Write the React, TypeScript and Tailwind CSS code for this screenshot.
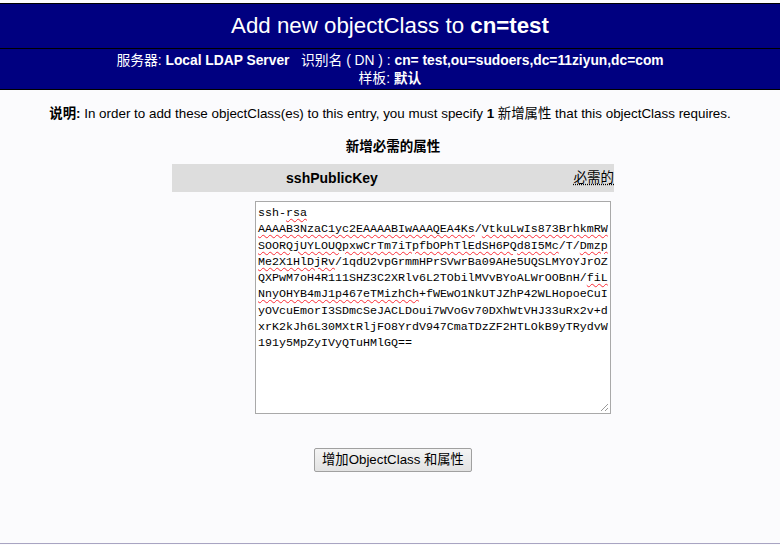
import React from "react";

const W = "underline decoration-wavy decoration-red-500 decoration-1 underline-offset-2";

export default function App() {
  const sans = { fontFamily: '"Liberation Sans", "Noto Sans CJK SC", sans-serif' };
  return (
    <div className="w-[780px] h-[545px] bg-[#fbfbfd] overflow-hidden" style={sans}>
      <div className="h-[544px] border-b border-[#a8a4c2] flex flex-col">
        <div className="h-[3px]" />
        <div className="bg-[#000080] border-t border-b border-black h-[46px] flex items-center justify-center text-white text-[22.3px] leading-none">
          <span>
            Add new objectClass to <b>cn=test</b>
          </span>
        </div>
        <div className="bg-[#000080] border-b border-black h-[41px] flex flex-col items-center pt-[3px] text-white text-[13.8px] leading-[17.5px]">
          <div>
            服务器: <b>Local LDAP Server</b>&nbsp;&nbsp; 识别名 ( DN ) : <b>cn= test,ou=sudoers,dc=11ziyun,dc=com</b>
          </div>
          <div>
            样板: <b>默认</b>
          </div>
        </div>

        <div className="mt-[15px] text-center text-[13.4px] leading-[17px] text-black">
          <b>说明:</b> In order to add these objectClass(es) to this entry, you must specify <b>1</b> 新增属性 that this objectClass requires.
        </div>

        <div className="flex justify-center mt-[16px]">
          <div className="w-[442px] ml-[6px] flex flex-col">
            <div className="text-center font-bold text-[13.5px] leading-[17px]">新增必需的属性</div>
            <div className="mt-[9px] h-[28px] bg-[#dddddd] flex items-center text-[13.5px]">
              <div className="w-[320px] text-center font-bold text-[14px]">sshPublicKey</div>
              <div className="flex-1 text-right">
                <span className="underline decoration-dotted underline-offset-2">必需的</span>
              </div>
            </div>
            <div
              className="relative mt-[9px] ml-[83px] w-[356px] h-[213px] border border-[#a9a9a9] bg-white px-[2px] pt-[3px] text-[11.67px] leading-[16.3px] text-black whitespace-pre"
              style={{ fontFamily: '"Liberation Mono", monospace' }}
            >
              <div>ssh-<span className={W}>rsa</span></div>
              <div><span className={W}>AAAAB3NzaC1yc2EAAAABIwAAAQEA4Ks</span>/<span className={W}>VtkuLwIs873BrhkmRW</span></div>
              <div><span className={W}>SOORQjUYLOUQpxwCrTm7iTpfbOPhTlEdSH6PQd8I5Mc</span>/T/<span className={W}>Dmzp</span></div>
              <div><span className={W}>Me2X1HlDjRv</span>/1qdU2vpGrmmHPrSVwrBa09AHe5UQSLMYOYJrOZ</div>
              <div>QXPwM7oH4R111SHZ3C2XRlv6L2TObilMVvBYoALWrOOBnH/<span className={W}>fiL</span></div>
              <div><span className={W}>NnyOHYB4mJ1p467eTMizhCh</span>+fWEwO1NkUTJZhP42WLHopoeCuI</div>
              <div>yOVcuEmorI3SDmcSeJACLDoui7WVoGv70DXhWtVHJ33uRx2v+d</div>
              <div>xrK2kJh6L30MXtRljFO8YrdV947CmaTDzZF2HTLOkB9yTRydvW</div>
              <div>191y5MpZyIVyQTuHMlGQ==</div>
              <svg className="absolute right-[1px] bottom-[1px]" width="10" height="10" viewBox="0 0 10 10">
                <line x1="9" y1="2" x2="2" y2="9" stroke="#9a9a9a" strokeWidth="1" />
                <line x1="9" y1="6" x2="6" y2="9" stroke="#9a9a9a" strokeWidth="1" />
              </svg>
            </div>
            <div className="flex justify-center mt-[34px]">
              <button
                className="h-[24px] px-[7px] border border-[#a0a0a0] rounded-[2px] bg-gradient-to-b from-[#f4f4f4] to-[#e2e2e2] text-[13.3px] text-black leading-none"
                style={{ fontFamily: '"Liberation Sans", "Noto Sans CJK SC", sans-serif' }}
              >
                增加ObjectClass 和属性
              </button>
            </div>
          </div>
        </div>
      </div>
    </div>
  );
}
